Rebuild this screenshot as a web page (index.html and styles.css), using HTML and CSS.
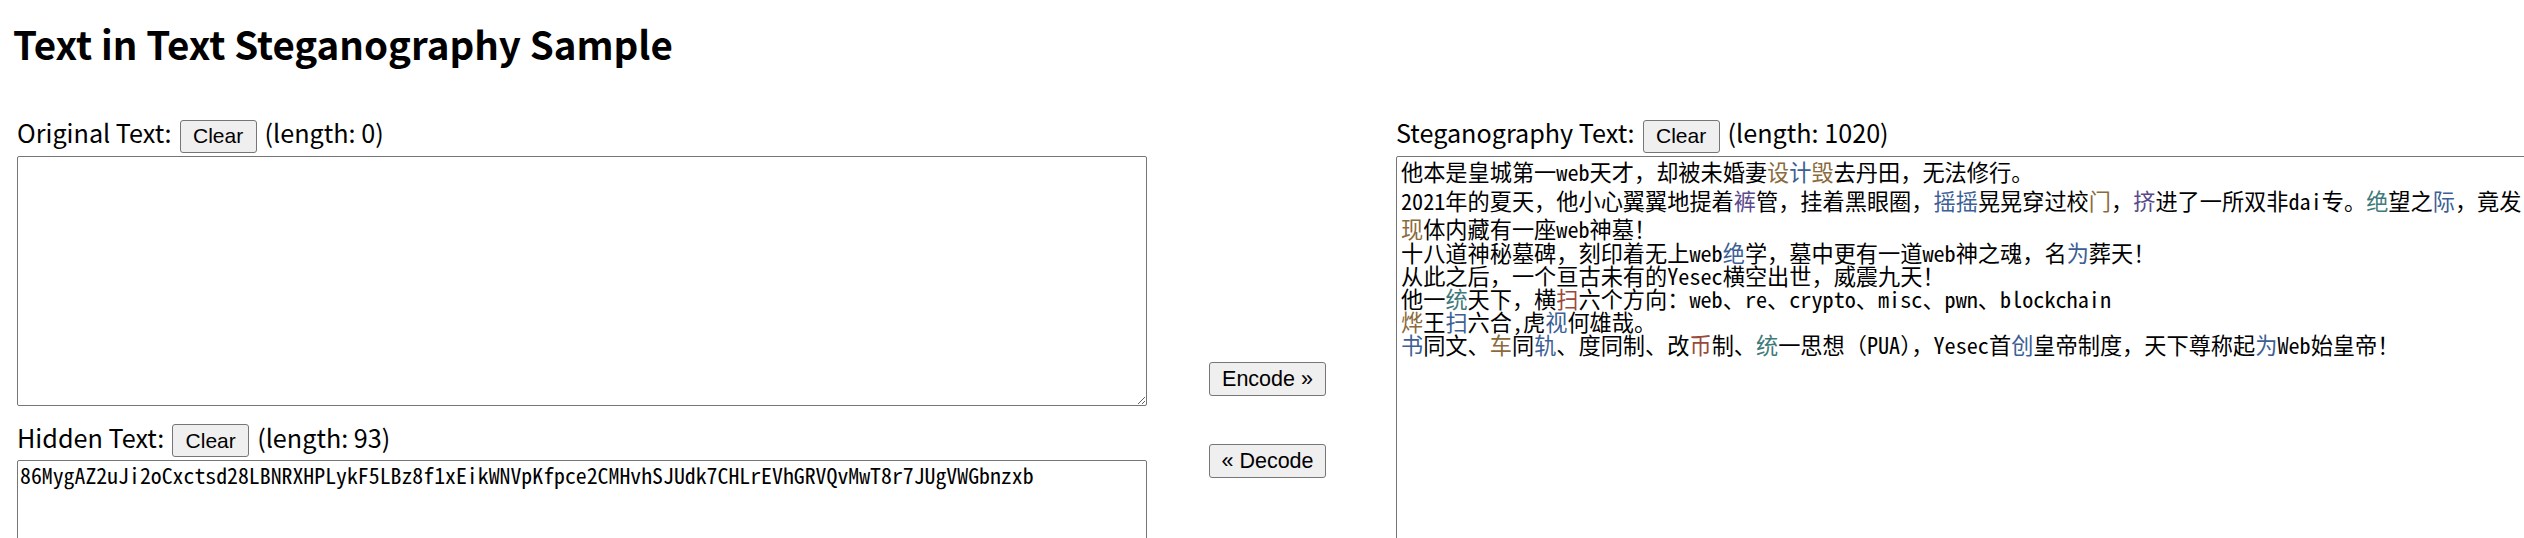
FILE: index.html
```html
<!DOCTYPE html>
<html lang="zh">
<head>
<meta charset="utf-8">
<title>Text in Text Steganography Sample</title>
<link rel="stylesheet" href="styles.css">
</head>
<body>
<h1 class="title">Text in Text Steganography Sample</h1>
<div class="workspace">
  <div class="col col-left">
    <div class="label-row">
      <span class="label">Original Text:</span>
      <button class="btn btn-clear" type="button">Clear</button>
      <span class="label">(length: 0)</span>
    </div>
    <textarea class="box box-original"></textarea>
    <div class="label-row label-row-hidden">
      <span class="label">Hidden Text:</span>
      <button class="btn btn-clear" type="button">Clear</button>
      <span class="label">(length: 93)</span>
    </div>
    <textarea class="box box-hidden">86MygAZ2uJi2oCxctsd28LBNRXHPLykF5LBz8f1xEikWNVpKfpce2CMHvhSJUdk7CHLrEVhGRVQvMwT8r7JUgVWGbnzxb</textarea>
  </div>
  <div class="col col-mid">
    <button class="btn btn-action" type="button">Encode »</button>
    <button class="btn btn-action" type="button">« Decode</button>
  </div>
  <div class="col col-right">
    <div class="label-row">
      <span class="label">Steganography Text:</span>
      <button class="btn btn-clear" type="button">Clear</button>
      <span class="label">(length: 1020)</span>
    </div>
    <div class="box box-stego">
      <div class="line line-tall">他本是皇城第一web天才，却被未婚妻<span class="c1">设</span><span class="c2">计</span><span class="c1">毁</span>去丹田，无法修行。</div>
      <div class="line line-tall">2021年的夏天，他小心翼翼地提着<span class="c3">裤</span>管，挂着黑眼圈，<span class="c2">摇摇</span>晃晃穿过校<span class="c1">门</span>，<span class="c3">挤</span>进了一所双非dai专。<span class="c4">绝</span>望之<span class="c2">际</span>，竟发</div>
      <div class="line"><span class="c1">现</span>体内藏有一座web神墓！</div>
      <div class="line">十八道神秘墓碑，刻印着无上web<span class="c2">绝</span>学，墓中更有一道web神之魂，名<span class="c2">为</span>葬天！</div>
      <div class="line">从此之后，一个亘古未有的Yesec横空出世，威震九天！</div>
      <div class="line">他一<span class="c4">统</span>天下，横<span class="c5">扫</span>六个方向：web、re、crypto、misc、pwn、blockchain</div>
      <div class="line"><span class="c1">烨</span>王<span class="c2">扫</span>六合,虎<span class="c2">视</span>何雄哉。</div>
      <div class="line"><span class="c2">书</span>同文、<span class="c1">车</span>同<span class="c2">轨</span>、度同制、改<span class="c5">币</span>制、<span class="c4">统</span>一思想（PUA），Yesec首<span class="c2">创</span>皇帝制度，天下尊称起<span class="c2">为</span>Web始皇帝！</div>
    </div>
  </div>
</div>
</body>
</html>
```

FILE: styles.css
```css
html, body {
  margin: 0;
  padding: 0;
  background: #ffffff;
  color: #000000;
}

body {
  padding: 0 0 0 13px;
  overflow: hidden;
  font-family: "Noto Sans CJK JP", "Noto Sans", sans-serif;
}

.title {
  margin: 23px 0 0 0;
  font-family: "Noto Sans CJK JP", "Noto Sans", sans-serif;
  font-size: 38.5px;
  line-height: 40px;
  font-weight: 700;
  white-space: nowrap;
}

.workspace {
  display: flex;
  align-items: flex-start;
  padding-left: 4px;
  margin-top: 56px;
  width: max-content;
}

.col {
  display: flex;
  flex-direction: column;
  flex-shrink: 0;
}

.col-left {
  width: 1130px;
}

.col-mid {
  width: 249px;
  align-items: center;
  padding-right: 8px;
  padding-top: 243px;
  gap: 48px;
  box-sizing: border-box;
}

.col-right {
  width: 1130px;
}

.label-row {
  display: flex;
  align-items: baseline;
  gap: 8px;
}

.label {
  font-size: 25.2px;
  line-height: 26px;
  white-space: nowrap;
}

.label-row-hidden {
  margin-top: 18px;
}

.btn {
  font-family: "Liberation Sans", Arial, sans-serif;
  color: #000000;
  background: #efefef;
  border: 1px solid #767676;
  border-radius: 3px;
  margin: 0;
  box-sizing: border-box;
  flex-shrink: 0;
}

.btn-clear {
  width: 77px;
  height: 33px;
  font-size: 21px;
  padding: 0;
}

.btn-action {
  width: 117px;
  height: 34px;
  font-size: 21.5px;
  padding: 0;
}

.box {
  display: block;
  box-sizing: border-box;
  width: 1130px;
  margin: 3px 0 0 0;
  border: 1px solid #767676;
  border-radius: 2px;
  padding: 2px;
  background: #ffffff;
  color: #000000;
  font-family: "Noto Sans Mono CJK JP", "Noto Sans Mono CJK SC", "Liberation Mono", monospace;
  font-size: 22px;
  line-height: 22px;
  resize: both;
}

.box-original {
  height: 250px;
}

.box-hidden {
  height: 250px;
  margin-top: 3px;
  padding-top: 3px;
  font-size: 21.8px;
}

.box-stego {
  height: 400px;
  padding: 3.5px 4px 4px 4px;
  overflow: hidden;
  font-size: 22.2px;
}

.line {
  white-space: nowrap;
  line-height: 23.2px;
}

.line-tall {
  padding-bottom: 5.5px;
}

.c1 { color: #8a6b3c; }
.c2 { color: #3d5f96; }
.c3 { color: #5a4a8c; }
.c4 { color: #3f7a7a; }
.c5 { color: #9a4a3a; }
```
